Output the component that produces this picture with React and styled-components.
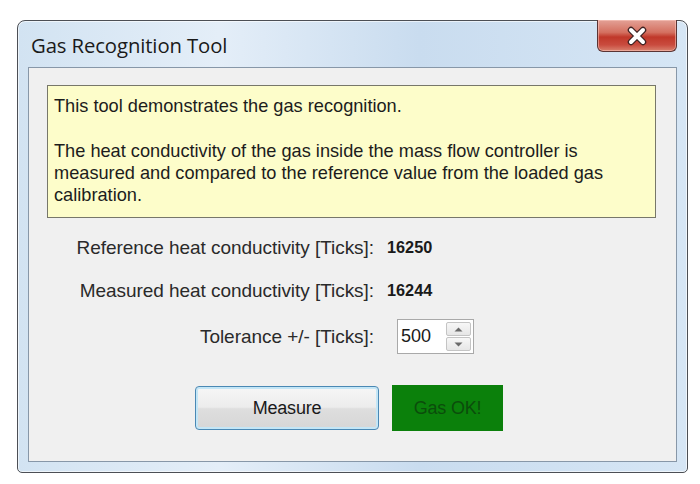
import React from "react";
import styled, { createGlobalStyle } from "styled-components";

const GlobalStyle = createGlobalStyle`
  html, body {
    margin: 0;
    padding: 0;
    background: #ffffff;
  }
  body {
    font-family: "Liberation Sans", Arial, sans-serif;
  }
`;

const App = () => {
  return (
    <>
      <GlobalStyle />
      <Frame>
        <TitleBar>
          <Title>Gas Recognition Tool</Title>
          <CloseButton>
            <svg width="24" height="20" viewBox="0 0 24 20">
              <path d="M6 4 L18 16 M18 4 L6 16" stroke="#3e2222" strokeWidth="6.5" strokeLinecap="round" />
              <path d="M6 4 L18 16 M18 4 L6 16" stroke="#ffffff" strokeWidth="4" strokeLinecap="round" />
            </svg>
          </CloseButton>
        </TitleBar>
        <Client>
          <InfoBox>
            <InfoText>This tool demonstrates the gas recognition.</InfoText>
            <InfoText>
              The heat conductivity of the gas inside the mass flow controller is
              measured and compared to the reference value from the loaded gas
              calibration.
            </InfoText>
          </InfoBox>
          <Fields>
            <Row height={43}>
              <Label>Reference heat conductivity [Ticks]:</Label>
              <Value>16250</Value>
            </Row>
            <Row height={43}>
              <Label>Measured heat conductivity [Ticks]:</Label>
              <Value>16244</Value>
            </Row>
            <Row height={49}>
              <Label>Tolerance +/- [Ticks]:</Label>
              <Spinner>
                <SpinInput>500</SpinInput>
                <SpinButtons>
                  <SpinButton>
                    <svg width="9" height="5" viewBox="0 0 9 5">
                      <path d="M0.5 4.5 L4.5 0.5 L8.5 4.5 Z" fill="#6a6a6a" />
                    </svg>
                  </SpinButton>
                  <SpinButton>
                    <svg width="9" height="5" viewBox="0 0 9 5">
                      <path d="M0.5 0.5 L4.5 4.5 L8.5 0.5 Z" fill="#6a6a6a" />
                    </svg>
                  </SpinButton>
                </SpinButtons>
              </Spinner>
            </Row>
          </Fields>
          <Actions>
            <MeasureButton>Measure</MeasureButton>
            <StatusBox>Gas OK!</StatusBox>
          </Actions>
        </Client>
      </Frame>
    </>
  );
};

const Frame = styled.div`
  margin: 20px 0 0 17px;
  width: 671px;
  height: 453px;
  box-sizing: border-box;
  border: 1px solid #4c4f55;
  border-radius: 8px 8px 5px 5px;
  background: linear-gradient(90deg, #d2e3f2 0%, #e4eef8 30%, #c9dcef 60%, #d6e6f5 100%);
  padding: 0 10px 10px 10px;
  display: flex;
  flex-direction: column;
  box-shadow: inset 0 0 0 1px rgba(255, 255, 255, 0.6);
`;

const TitleBar = styled.div`
  height: 46px;
  display: flex;
  align-items: flex-start;
  justify-content: space-between;
`;

const Title = styled.div`
  font-family: "Open Sans", "Noto Sans", sans-serif;
  font-size: 20.3px;
  color: #1a1a1a;
  margin: 10px 0 0 3px;
  letter-spacing: -0.1px;
`;

const CloseButton = styled.div`
  width: 80px;
  height: 32px;
  margin-top: -1px;
  box-sizing: border-box;
  border: 1px solid #5a3434;
  border-top: none;
  border-radius: 0 0 6px 6px;
  background: linear-gradient(180deg, #e3a196 0%, #d47060 40%, #c0382a 55%, #c94b3e 80%, #d9826f 100%);
  display: flex;
  align-items: center;
  justify-content: center;
  box-shadow: inset 0 0 0 1px rgba(255, 210, 200, 0.5);
`;

const Client = styled.div`
  flex: 1;
  box-sizing: border-box;
  background: #f0f0f0;
  border: 1px solid #8797a8;
  padding: 17px 20px 0 18px;
  display: flex;
  flex-direction: column;
`;

const InfoBox = styled.div`
  height: 133px;
  box-sizing: border-box;
  background: #fdfdca;
  border: 1px solid #77776a;
  padding: 9px 12px 0 6px;
  color: #1c1c1c;
`;

const InfoText = styled.p`
  margin: 0 0 23px 0;
  font-size: 18.2px;
  line-height: 22px;
  letter-spacing: 0;
`;

const Fields = styled.div`
  margin-top: 8px;
  display: flex;
  flex-direction: column;
`;

const Row = styled.div`
  display: grid;
  grid-template-columns: 345px auto;
  column-gap: 13px;
  align-items: center;
  height: ${({ height }) => height}px;
  margin-left: -18px;
`;

const Label = styled.div`
  text-align: right;
  font-size: 19px;
  color: #2a2a2a;
  letter-spacing: -0.05px;
`;

const Value = styled.div`
  font-size: 16.3px;
  font-weight: bold;
  color: #1a1a1a;
`;

const Spinner = styled.div`
  margin-left: 10px;
  width: 77px;
  height: 35px;
  box-sizing: border-box;
  border: 1px solid #a9a9a9;
  background: #ffffff;
  display: flex;
  align-items: center;
  padding: 2px 2px 2px 3px;
`;

const SpinInput = styled.div`
  flex: 1;
  font-size: 18px;
  color: #1a1a1a;
`;

const SpinButtons = styled.div`
  width: 25px;
  height: 100%;
  display: flex;
  flex-direction: column;
  gap: 1px;
`;

const SpinButton = styled.div`
  flex: 1;
  box-sizing: border-box;
  border: 1px solid #c4c4c4;
  border-radius: 2px;
  background: linear-gradient(180deg, #f7f7f7 0%, #e6e6e6 100%);
  display: flex;
  align-items: center;
  justify-content: center;
`;

const Actions = styled.div`
  display: flex;
  gap: 13px;
  margin-top: 25px;
  padding-left: 148px;
`;

const MeasureButton = styled.div`
  width: 184px;
  height: 44px;
  box-sizing: border-box;
  border: 1px solid #4a88b4;
  border-radius: 4px;
  background: linear-gradient(180deg, #f6f6f6 0%, #ececec 48%, #dedede 52%, #d6d6d6 100%);
  box-shadow: inset 0 0 0 2px #c4e6f6;
  display: flex;
  align-items: center;
  justify-content: center;
  font-size: 18px;
  color: #1a1a1a;
  letter-spacing: -0.2px;
`;

const StatusBox = styled.div`
  width: 111px;
  height: 46px;
  margin-top: -1px;
  box-sizing: border-box;
  background: #0b800b;
  display: flex;
  align-items: center;
  justify-content: center;
  font-size: 18px;
  color: #0b4d0b;
  letter-spacing: -0.2px;
`;

export default App;
